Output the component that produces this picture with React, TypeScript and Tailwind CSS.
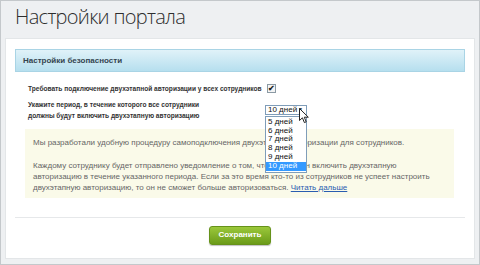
import React from "react";

const days = ["5 дней", "6 дней", "7 дней", "8 дней", "9 дней", "10 дней"];

function Cursor() {
  return (
    <svg
      width="11"
      height="16"
      viewBox="0 0 11 16"
      className="absolute left-[34px] top-[3px]"
    >
      <path
        d="M0.5 0.5 L0.5 12.5 L3.4 9.8 L5.4 14.6 L7.2 13.8 L5.3 9.2 L9.3 9.2 Z"
        fill="#fff"
        stroke="#222"
        strokeWidth="1"
        strokeLinejoin="round"
      />
    </svg>
  );
}

function DaySelect() {
  return (
    <div className="relative w-[42px]">
      <div className="h-[10px] border border-[#7f9db9] bg-white flex items-center justify-between pl-[2px] pr-[3px] text-[8px] leading-none text-[#111]">
        <span>10 дней</span>
        <span className="text-[5px]">▼</span>
      </div>
      <div className="absolute left-0 top-[11px] w-[42px] border border-[#7f9db9] bg-white py-[1px]">
        {days.map((d) => (
          <div
            key={d}
            className={`h-[8.8px] pl-[2px] text-[8px] leading-[8.8px] ${
              d === "10 дней" ? "bg-[#3399ff] text-white" : "text-[#111]"
            }`}
          >
            {d}
          </div>
        ))}
      </div>
      <Cursor />
    </div>
  );
}

export default function App() {
  return (
    <div
      className="w-[480px] h-[265px] bg-[#eef0f2] border border-[#c4c8cb] overflow-hidden"
      style={{ fontFamily: '"Liberation Sans", Arial, sans-serif' }}
    >
      {/* ── Page title ── */}
      <div
        className="h-[37px] pl-[14px] pt-[1px] text-[20px] tracking-[-0.7px] font-light text-[#2d2d2d] leading-[30px]"
        style={{ fontFamily: '"Open Sans", "Noto Sans", sans-serif' }}
      >
        Настройки портала
      </div>

      {/* ── Card ── */}
      <div className="mx-[4px] h-[221px] bg-white border border-[#e3e6e8] px-[9px] pt-[10px] flex flex-col">
        <div className="h-[23px] border border-[#a9d4e5] bg-gradient-to-b from-[#e0f2f9] to-[#b6dfee] px-[7px] flex items-center text-[8px] font-bold text-[#34444f]">
          Настройки безопасности
        </div>

        <div className="mt-[12px] pl-[13px] flex items-center gap-[5px] text-[6.6px] font-bold text-[#333]">
          <span>Требовать подключение двухэтапной авторизации у всех сотрудников</span>
          <span className="w-[9px] h-[9px] border border-[#8b9aa4] bg-[#f4f4f4] flex items-center justify-center text-[8px] leading-none text-[#222]">
            ✔
          </span>
        </div>

        <div className="mt-[5px] pl-[13px] flex items-center relative z-10">
          <div className="w-[237px] text-[6.6px] font-bold text-[#333] leading-[11px]">
            Укажите период, в течение которого все сотрудники
            <br />
            должны будут включить двухэтапную авторизацию
          </div>
          <DaySelect />
        </div>

        <div className="mt-[8px] ml-[10px] mr-[11px] h-[69px] bg-[#fafae9] px-[8px] pt-[8px] text-[8px] leading-[11px] text-[#666]">
          <p>
            Мы разработали удобную процедуру самоподключения двухэтапной авторизации для сотрудников.
          </p>
          <p className="mt-[12px]">
            Каждому сотруднику будет отправлено уведомление о том, что он должен включить двухэтапную
            авторизацию в течение указанного периода. Если за это время кто-то из сотрудников не успеет
            настроить двухэтапную авторизацию, то он не сможет больше авторизоваться.{" "}
            <a className="text-[#2a5db0] underline">Читать дальше</a>
          </p>
        </div>

        <div className="mt-[19px] border-t border-[#e6e8ea]" />

        <div className="flex justify-center pt-[8px]">
          <button className="w-[62px] h-[19px] rounded-[3px] bg-gradient-to-b from-[#9bc83a] to-[#6b9b18] border border-[#66921a] text-white text-[8px] font-bold shadow-[0_1px_1px_rgba(0,0,0,0.25)]">
            Сохранить
          </button>
        </div>
      </div>
    </div>
  );
}
